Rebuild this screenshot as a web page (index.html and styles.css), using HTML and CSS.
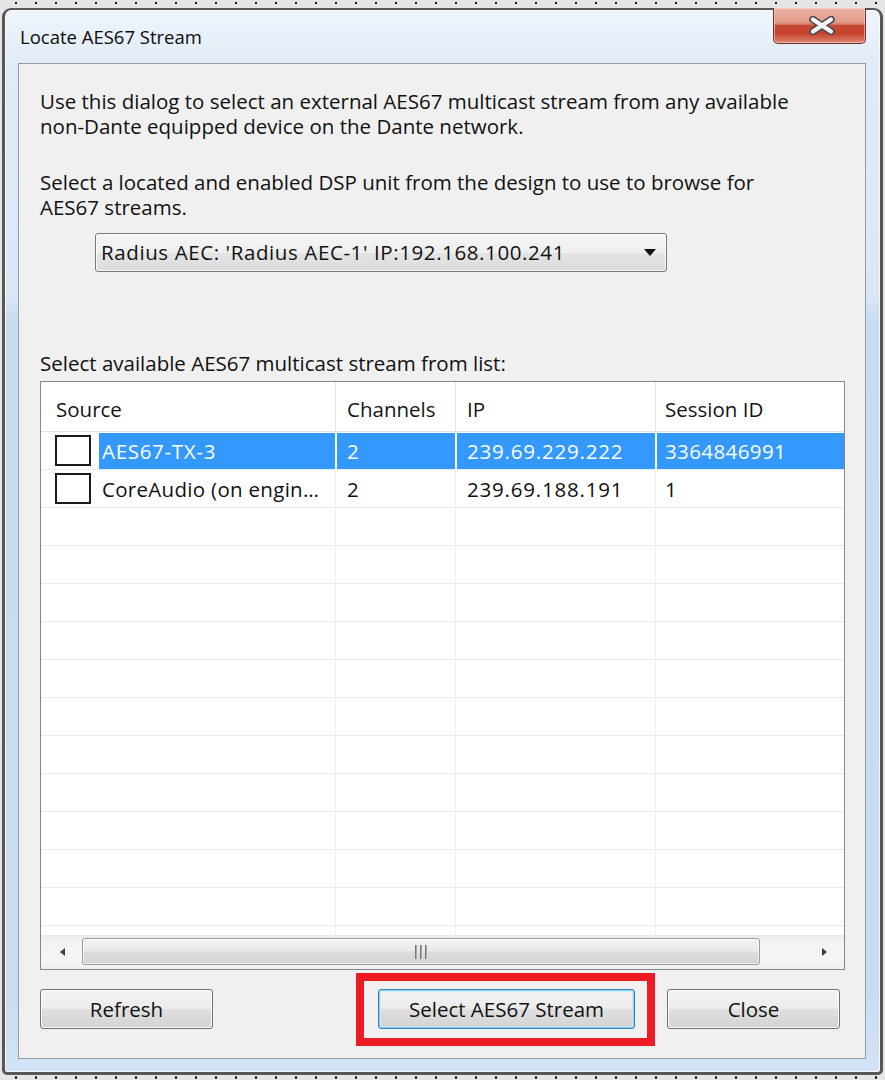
FILE: index.html
```html
<!DOCTYPE html>
<html>
<head>
<meta charset="utf-8">
<title>Locate AES67 Stream</title>
<link rel="stylesheet" href="styles.css">
</head>
<body>
<div class="screen">
  <div class="dots dots-top"></div>
  <div class="window">
    <div class="titlebar">
      <div class="title">Locate AES67 Stream</div>
      <div class="close-btn">
        <svg width="26" height="19" viewBox="0 0 26 19">
          <path d="M4 3.5 L22 15.5 M22 3.5 L4 15.5" stroke="#4b4b4b" stroke-width="7.5" stroke-linecap="round"/>
          <path d="M4 3.5 L22 15.5 M22 3.5 L4 15.5" stroke="#f4f4f4" stroke-width="4.2" stroke-linecap="round"/>
        </svg>
      </div>
    </div>
    <div class="client">
      <p class="text"><span class="line">Use this dialog to select an external AES67 multicast stream from any available</span><span class="line">non-Dante equipped device on the Dante network.</span></p>
      <p class="text text-2"><span class="line">Select a located and enabled DSP unit from the design to use to browse for</span><span class="line">AES67 streams.</span></p>
      <div class="combo">
        <span class="combo-value">Radius AEC: 'Radius AEC-1' IP:192.168.100.241</span>
        <span class="combo-arrow"></span>
      </div>
      <p class="text label">Select available AES67 multicast stream from list:</p>
      <div class="list">
        <div class="list-head">
          <div class="hcell hcell-source">Source</div>
          <div class="hcell">Channels</div>
          <div class="hcell">IP</div>
          <div class="hcell hcell-session">Session ID</div>
        </div>
        <div class="list-body">
          <div class="row selected">
            <div class="cell cell-source"><span class="check"></span><span class="val val-source val-tx">AES67-TX-3</span></div>
            <div class="cell"><span class="val">2</span></div>
            <div class="cell"><span class="val val-ip">239.69.229.222</span></div>
            <div class="cell"><span class="val val-session">3364846991</span></div>
          </div>
          <div class="row">
            <div class="cell cell-source"><span class="check"></span><span class="val val-source">CoreAudio (on engin…</span></div>
            <div class="cell"><span class="val">2</span></div>
            <div class="cell"><span class="val val-ip">239.69.188.191</span></div>
            <div class="cell"><span class="val val-session">1</span></div>
          </div>
          <div class="row"><div class="cell"></div><div class="cell"></div><div class="cell"></div><div class="cell"></div></div>
          <div class="row"><div class="cell"></div><div class="cell"></div><div class="cell"></div><div class="cell"></div></div>
          <div class="row"><div class="cell"></div><div class="cell"></div><div class="cell"></div><div class="cell"></div></div>
          <div class="row"><div class="cell"></div><div class="cell"></div><div class="cell"></div><div class="cell"></div></div>
          <div class="row"><div class="cell"></div><div class="cell"></div><div class="cell"></div><div class="cell"></div></div>
          <div class="row"><div class="cell"></div><div class="cell"></div><div class="cell"></div><div class="cell"></div></div>
          <div class="row"><div class="cell"></div><div class="cell"></div><div class="cell"></div><div class="cell"></div></div>
          <div class="row"><div class="cell"></div><div class="cell"></div><div class="cell"></div><div class="cell"></div></div>
          <div class="row"><div class="cell"></div><div class="cell"></div><div class="cell"></div><div class="cell"></div></div>
          <div class="row"><div class="cell"></div><div class="cell"></div><div class="cell"></div><div class="cell"></div></div>
          <div class="row"><div class="cell"></div><div class="cell"></div><div class="cell"></div><div class="cell"></div></div>
          <div class="row"><div class="cell"></div><div class="cell"></div><div class="cell"></div><div class="cell"></div></div>
        </div>
        <div class="hscroll">
          <div class="sb-btn"><span class="sb-arrow-left"></span></div>
          <div class="sb-track">
            <div class="sb-thumb"><span class="grip"></span><span class="grip"></span><span class="grip"></span></div>
          </div>
          <div class="sb-btn"><span class="sb-arrow-right"></span></div>
        </div>
      </div>
      <div class="buttons">
        <button class="btn btn-side">Refresh</button>
        <div class="btn-wrap">
          <button class="btn btn-default">Select AES67 Stream</button>
          <div class="highlight"></div>
        </div>
        <button class="btn btn-side btn-close">Close</button>
      </div>
    </div>
  </div>
  <div class="dots dots-bottom"></div>
</div>
</body>
</html>
```

FILE: styles.css
```css
html, body {
  margin: 0;
  padding: 0;
}

body {
  font-family: "Open Sans", "Noto Sans", "DejaVu Sans", sans-serif;
  color: #111;
}

.screen {
  width: 885px;
  height: 1080px;
  background: #e6e6e6;
  overflow: hidden;
}

.dots {
  background-image: radial-gradient(circle, #1c1c1c 0, #1c1c1c 1px, transparent 1.6px);
}

.dots-top {
  height: 8px;
  background-size: 20px 8px;
  background-position: 6px -1px;
}

.dots-bottom {
  height: 5px;
  background-size: 20px 5px;
  background-position: 6px 0;
}

.window {
  margin-left: 2px;
  width: 881px;
  height: 1067px;
  box-sizing: border-box;
  border: 3px solid #575757;
  border-top-width: 2px;
  border-radius: 9px 9px 5px 5px;
  background: linear-gradient(180deg, #eef4fb 0, #e1ebf7 60px, #dce7f5 285px, #c7dbf1 312px, #c9dcf2 980px, #d3e3f5 100%);
  box-shadow: inset 0 0 0 1px rgba(255, 255, 255, 0.75);
  padding: 0 14px 13px 13px;
  display: flex;
  flex-direction: column;
}

.titlebar {
  height: 53px;
  display: flex;
  align-items: flex-start;
  flex: none;
}

.title {
  flex: 1;
  margin: 14px 0 0 2px;
  font-size: 18.5px;
  line-height: 25px;
  color: #0c0c0c;
}

.close-btn {
  margin-top: -2px;
  width: 93px;
  height: 36px;
  box-sizing: border-box;
  border: 1px solid #6a2f27;
  border-top: none;
  border-radius: 0 0 5px 5px;
  background: linear-gradient(180deg, #eab1a3 0, #e29a88 40%, #d9826f 46%, #c64a35 50%, #c7412d 72%, #d46d57 90%, #e08f78 100%);
  box-shadow: inset 0 0 0 1px rgba(255, 220, 210, 0.55);
  display: flex;
  align-items: center;
  justify-content: center;
}

.close-btn svg {
  display: block;
  margin-left: 4px;
}

.client {
  height: 996px;
  box-sizing: border-box;
  border: 1px solid #939ca7;
  background: #f0f0f0;
  padding: 25px 20px 0 21px;
  font-size: 20.5px;
}

.text {
  margin: 0;
  line-height: 25px;
  white-space: nowrap;
}

.line {
  display: block;
  height: 25px;
}

.text-2 {
  margin-top: 31px;
}

.combo {
  margin: 13px 0 0 55px;
  width: 572px;
  height: 39px;
  box-sizing: border-box;
  border: 1px solid #7a7a7a;
  border-radius: 3px;
  background: linear-gradient(180deg, #f6f6f6 0, #eeeeee 50%, #e4e4e4 51%, #dcdcdc 100%);
  box-shadow: inset 0 0 0 1px rgba(255, 255, 255, 0.8);
  display: flex;
  align-items: center;
  padding: 0 10px 0 5px;
}

.combo-value {
  flex: 1;
  line-height: 25px;
  white-space: nowrap;
  letter-spacing: 0.6px;
}

.combo-arrow {
  width: 0;
  height: 0;
  border-left: 6px solid transparent;
  border-right: 6px solid transparent;
  border-top: 7px solid #111;
}

.label {
  margin-top: 79px;
}

.list {
  margin-top: 5px;
  height: 589px;
  box-sizing: border-box;
  border: 1px solid #828790;
  background: #fff;
  display: flex;
  flex-direction: column;
}

.list-head {
  height: 50px;
  box-sizing: border-box;
  border-bottom: 1px solid #e3e3e3;
  display: grid;
  grid-template-columns: 295px 120px 200px 1fr;
  flex: none;
}

.hcell {
  border-right: 1px solid #e6e6e6;
  display: flex;
  align-items: center;
  padding: 6px 0 0 11px;
  line-height: 25px;
  color: #151515;
}

.hcell-source {
  padding-left: 15px;
}

.hcell-session {
  padding-left: 9px;
  border-right: none;
}

.list-body {
  height: 503px;
  overflow: hidden;
  flex: none;
}

.row {
  height: 38px;
  box-sizing: border-box;
  border-bottom: 1px solid #ececec;
  display: grid;
  grid-template-columns: 295px 120px 200px 1fr;
}

.cell {
  border-right: 1px solid #efefef;
  display: flex;
  align-items: stretch;
  min-width: 0;
}

.cell:last-child {
  border-right: none;
}

.cell-source {
  padding-left: 14px;
  align-items: center;
}

.val {
  flex: 1;
  margin: 1px 0 0 1px;
  padding-left: 10px;
  display: flex;
  align-items: center;
  line-height: 25px;
  white-space: nowrap;
  letter-spacing: 0.3px;
}

.val-source {
  align-self: stretch;
  margin-left: 8px;
  padding-left: 3px;
}

.val-tx {
  letter-spacing: 0.7px;
}

.val-ip {
  letter-spacing: 0.8px;
}

.val-session {
  padding-left: 8px;
  letter-spacing: 0.4px;
}

.selected .val {
  background: #3399ff;
  color: #fff;
}

.selected .cell {
  border-right-color: #fff;
}

.check {
  width: 36px;
  height: 31px;
  box-sizing: border-box;
  border: 2px solid #1b1b1b;
  background: #fff;
  flex: none;
}

.hscroll {
  flex: 1;
  display: flex;
  background: linear-gradient(180deg, #e9e9e9 0, #f3f3f3 20%, #f5f5f5 80%, #eeeeee 100%);
}

.sb-btn {
  width: 39px;
  display: flex;
  align-items: center;
  justify-content: center;
  flex: none;
}

.sb-arrow-left {
  width: 0;
  height: 0;
  border-top: 4.5px solid transparent;
  border-bottom: 4.5px solid transparent;
  border-right: 5px solid #3e3e3e;
  margin-left: 3px;
}

.sb-arrow-right {
  width: 0;
  height: 0;
  border-top: 4.5px solid transparent;
  border-bottom: 4.5px solid transparent;
  border-left: 5px solid #3e3e3e;
}

.sb-track {
  flex: 1;
  padding: 3px 0 4px 2px;
  display: flex;
}

.sb-thumb {
  width: 678px;
  box-sizing: border-box;
  border: 1px solid #9b9b9b;
  border-radius: 3px;
  background: linear-gradient(180deg, #f4f4f4 0, #e9e9e9 45%, #dcdcdc 55%, #d2d2d2 100%);
  box-shadow: inset 0 0 0 1px rgba(255, 255, 255, 0.7);
  display: flex;
  align-items: center;
  justify-content: center;
  gap: 2px;
}

.grip {
  width: 3px;
  height: 14px;
  background: linear-gradient(90deg, #777 0, #777 1px, #d8d8d8 2px, #f2f2f2 3px);
}

.buttons {
  margin-top: 19px;
  display: flex;
  align-items: center;
}

.btn {
  height: 40px;
  box-sizing: border-box;
  border: 1px solid #727272;
  border-radius: 3px;
  background: linear-gradient(180deg, #f3f3f3 0, #ececec 48%, #dfdfdf 52%, #d3d3d3 100%);
  box-shadow: inset 0 0 0 1px rgba(255, 255, 255, 0.85);
  font-family: "Open Sans", "Noto Sans", "DejaVu Sans", sans-serif;
  font-size: 20.5px;
  color: #111;
  padding: 0;
  line-height: 25px;
}

.btn-side {
  width: 173px;
}

.btn-wrap {
  position: relative;
  margin-left: 165px;
  display: flex;
}

.btn-default {
  width: 257px;
  border-color: #3c7fb1;
  box-shadow: inset 0 0 0 1px #7fd0f5, inset 0 0 0 2px rgba(200, 235, 252, 0.7);
}

.highlight {
  position: absolute;
  left: -22px;
  right: -20px;
  top: -16px;
  bottom: -17px;
  border: 8px solid #ed1c24;
}

.btn-close {
  margin-left: 32px;
}
```
